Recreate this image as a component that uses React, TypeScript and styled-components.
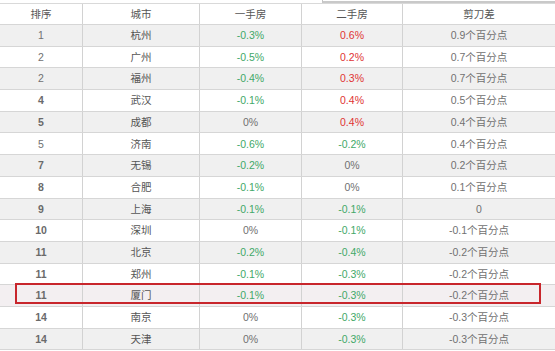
import React from "react";
import styled, { createGlobalStyle } from "styled-components";

const GlobalStyle = createGlobalStyle`
  html, body {
    margin: 0;
    padding: 0;
    background: #ffffff;
  }
  body {
    font-family: "Liberation Sans", "Noto Sans CJK SC", sans-serif;
  }
`;

const StyledPage = styled.div`
  position: relative;
  width: 555px;
  height: 351px;
  overflow: hidden;
  background: #ffffff;
`;

const StyledTopStrip = styled.div`
  height: 3px;
  display: flex;
`;

const StyledStripBox = styled.div`
  margin-left: 322px;
  flex: 1;
  border-left: 1px solid #c4c4c4;
  border-bottom: 2px solid #c9c9c9;
  box-sizing: border-box;
`;

const StyledTable = styled.div`
  border-top: 1px solid #d9d9d9;
`;

const StyledRow = styled.div<{ $shaded?: boolean; $header?: boolean; $tint?: string }>`
  display: grid;
  grid-template-columns: 83px 117px 102px 101px 1fr;
  height: ${({ $header }) => ($header ? "21px" : "21.7px")};
  box-sizing: border-box;
  border-bottom: 1px solid #d6d6d6;
  background: ${({ $shaded, $tint }) => $tint ?? ($shaded ? "#f0f0f0" : "#ffffff")};
`;

const StyledCell = styled.div<{ $tone?: "up" | "down" | "plain"; $bold?: boolean; $header?: boolean }>`
  display: flex;
  align-items: center;
  justify-content: center;
  border-right: 1px solid #d2d2d2;
  font-size: 10.5px;
  line-height: 1;
  white-space: nowrap;
  font-weight: ${({ $bold }) => ($bold ? 700 : 400)};
  color: ${({ $tone, $header, $bold }) =>
    $tone === "up" ? "#e03434" : $tone === "down" ? "#42a868" : $header ? "#555555" : $bold ? "#6a6a6a" : "#717171"};

  &:last-child {
    border-right: none;
  }
`;

const StyledHighlight = styled.div`
  position: absolute;
  left: 15px;
  top: 283px;
  width: 526px;
  height: 21px;
  box-sizing: border-box;
  border: 2px solid #c8262c;
  pointer-events: none;
`;

interface RowData {
  rank: string;
  bold: boolean;
  city: string;
  fresh: string;
  resale: string;
  gap: string;
}

const rows: RowData[] = [
  { rank: "1", bold: false, city: "杭州", fresh: "-0.3%", resale: "0.6%", gap: "0.9个百分点" },
  { rank: "2", bold: false, city: "广州", fresh: "-0.5%", resale: "0.2%", gap: "0.7个百分点" },
  { rank: "2", bold: false, city: "福州", fresh: "-0.4%", resale: "0.3%", gap: "0.7个百分点" },
  { rank: "4", bold: true, city: "武汉", fresh: "-0.1%", resale: "0.4%", gap: "0.5个百分点" },
  { rank: "5", bold: true, city: "成都", fresh: "0%", resale: "0.4%", gap: "0.4个百分点" },
  { rank: "5", bold: false, city: "济南", fresh: "-0.6%", resale: "-0.2%", gap: "0.4个百分点" },
  { rank: "7", bold: true, city: "无锡", fresh: "-0.2%", resale: "0%", gap: "0.2个百分点" },
  { rank: "8", bold: true, city: "合肥", fresh: "-0.1%", resale: "0%", gap: "0.1个百分点" },
  { rank: "9", bold: true, city: "上海", fresh: "-0.1%", resale: "-0.1%", gap: "0" },
  { rank: "10", bold: true, city: "深圳", fresh: "0%", resale: "-0.1%", gap: "-0.1个百分点" },
  { rank: "11", bold: true, city: "北京", fresh: "-0.2%", resale: "-0.4%", gap: "-0.2个百分点" },
  { rank: "11", bold: true, city: "郑州", fresh: "-0.1%", resale: "-0.3%", gap: "-0.2个百分点" },
  { rank: "11", bold: true, city: "厦门", fresh: "-0.1%", resale: "-0.3%", gap: "-0.2个百分点" },
  { rank: "14", bold: true, city: "南京", fresh: "0%", resale: "-0.3%", gap: "-0.3个百分点" },
  { rank: "14", bold: true, city: "天津", fresh: "0%", resale: "-0.3%", gap: "-0.3个百分点" },
];

const toneOf = (value: string): "up" | "down" | "plain" =>
  value.startsWith("-") ? "down" : value === "0%" ? "plain" : "up";

export default function App() {
  return (
    <StyledPage>
      <GlobalStyle />
      <StyledTopStrip>
        <StyledStripBox />
      </StyledTopStrip>
      <StyledTable>
        <StyledRow $header>
          <StyledCell $header>排序</StyledCell>
          <StyledCell $header>城市</StyledCell>
          <StyledCell $header>一手房</StyledCell>
          <StyledCell $header>二手房</StyledCell>
          <StyledCell $header>剪刀差</StyledCell>
        </StyledRow>
        {rows.map((r, i) => (
          <StyledRow key={r.city} $shaded={i % 2 === 0} $tint={r.city === "厦门" ? "#f3eff1" : undefined}>
            <StyledCell $bold={r.bold}>{r.rank}</StyledCell>
            <StyledCell $header>{r.city}</StyledCell>
            <StyledCell $tone={toneOf(r.fresh)}>{r.fresh}</StyledCell>
            <StyledCell $tone={toneOf(r.resale)}>{r.resale}</StyledCell>
            <StyledCell>{r.gap}</StyledCell>
          </StyledRow>
        ))}
      </StyledTable>
      <StyledHighlight />
    </StyledPage>
  );
}
